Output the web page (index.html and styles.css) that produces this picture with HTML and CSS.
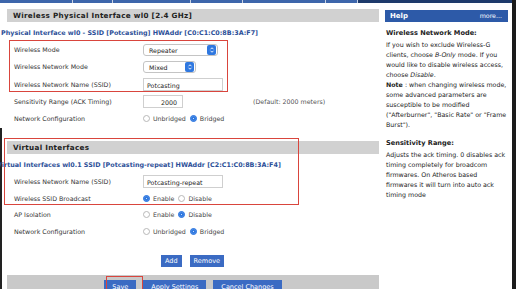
FILE: index.html
```html
<!DOCTYPE html>
<html lang="en">
<head>
  <meta charset="UTF-8">
  <title>Wireless Basic Settings</title>
  <link rel="stylesheet" href="styles.css">
</head>
<body>
  <div class="window">
    <div class="tabs">
      <span class="tab" style="width:72px"></span>
      <span class="tab" style="width:39px"></span>
      <span class="tab" style="width:77px"></span>
      <span class="tab" style="width:51px"></span>
      <span class="tab" style="width:82px"></span>
      <span class="tab" style="width:31px"></span>
    </div>

    <div class="page">
      <div class="main">
        <h2 class="section-title">Wireless Physical Interface wl0 [2.4 GHz]</h2>
        <div class="legend">Physical Interface wl0 - SSID [Potcasting] HWAddr [C0:C1:C0:8B:3A:F7]</div>

        <div class="rows">
          <div class="row">
            <span class="label">Wireless Mode</span>
            <span class="select select-wide">Repeater<span class="arrows"><svg viewBox="0 0 8 10" width="6" height="8"><path d="M2 4 L4 2 L6 4 M2 6 L4 8 L6 6" fill="none" stroke="#fff" stroke-width="1.2"/></svg></span></span>
          </div>
          <div class="row">
            <span class="label">Wireless Network Mode</span>
            <span class="select select-narrow">Mixed<span class="arrows"><svg viewBox="0 0 8 10" width="6" height="8"><path d="M2 4 L4 2 L6 4 M2 6 L4 8 L6 6" fill="none" stroke="#fff" stroke-width="1.2"/></svg></span></span>
          </div>
          <div class="row">
            <span class="label">Wireless Network Name (SSID)</span>
            <span class="input input-text">Potcasting</span>
          </div>
          <div class="row">
            <span class="label">Sensitivity Range (ACK Timing)</span>
            <span class="input input-num">2000</span>
            <span class="note">(Default: 2000 meters)</span>
          </div>
          <div class="row">
            <span class="label">Network Configuration</span>
            <span class="radio"></span><span class="opt">Unbridged</span>
            <span class="radio on"></span><span class="opt">Bridged</span>
          </div>
        </div>

        <h2 class="section-title second">Virtual Interfaces</h2>
        <div class="legend shifted">Virtual Interfaces wl0.1 SSID [Potcasting-repeat] HWAddr [C2:C1:C0:8B:3A:F4]</div>

        <div class="rows tight">
          <div class="row">
            <span class="label">Wireless Network Name (SSID)</span>
            <span class="input input-text">Potcasting-repeat</span>
          </div>
          <div class="row">
            <span class="label">Wireless SSID Broadcast</span>
            <span class="radio on"></span><span class="opt">Enable</span>
            <span class="radio"></span><span class="opt">Disable</span>
          </div>
          <div class="row">
            <span class="label">AP Isolation</span>
            <span class="radio"></span><span class="opt">Enable</span>
            <span class="radio on"></span><span class="opt">Disable</span>
          </div>
          <div class="row">
            <span class="label">Network Configuration</span>
            <span class="radio"></span><span class="opt">Unbridged</span>
            <span class="radio on"></span><span class="opt">Bridged</span>
          </div>
        </div>

        <div class="add-remove">
          <button class="btn">Add</button>
          <button class="btn">Remove</button>
        </div>

        <div class="submit-bar">
          <button class="btn">Save</button>
          <button class="btn">Apply Settings</button>
          <button class="btn">Cancel Changes</button>
        </div>
      </div>

      <div class="help">
        <div class="help-head"><span>Help</span><span class="more">more...</span></div>
        <h3>Wireless Network Mode:</h3>
        <p>If you wish to exclude Wireless-G clients, choose <i>B-Only</i> mode. If you would like to disable wireless access, choose <i>Disable</i>.</p>
        <p><b>Note</b> : when changing wireless mode, some advanced parameters are susceptible to be modified ("Afterburner", "Basic Rate" or "Frame Burst").</p>
        <h3 class="gap">Sensitivity Range:</h3>
        <p>Adjusts the ack timing. 0 disables ack timing completely for broadcom firmwares. On Atheros based firmwares it will turn into auto ack timing mode</p>
      </div>
    </div>

    <!-- annotation boxes drawn over the screenshot -->
    <div class="mark mark-1"></div>
    <div class="mark mark-2"></div>
    <div class="mark mark-3"></div>
  </div>
</body>
</html>
```

FILE: styles.css
```css
body {
  margin: 0;
  background: #fff;
  font-family: "DejaVu Sans", Verdana, sans-serif;
  font-size: 6.3px;
  color: #333;
}
.window {
  position: relative;
  width: 512px;
  height: 289px;
  overflow: hidden;
  border-right: 4px solid #1b1b1b;
  /* dark edge of the browser frame down the lower left side */
  background: linear-gradient(#222, #222) no-repeat 0 128px / 2px 161px;
}
.tabs {
  display: flex;
  height: 3px;
  background: #1e3a6b;
}
.tab {
  background: #3d66ab;
  border-right: 1px solid #c9d3e4;
}
.page {
  display: flex;
}
.main {
  width: 372px;
  margin-left: 7px;
}
.section-title {
  margin: 6px 0 0;
  height: 13px;
  line-height: 13px;
  padding-left: 6px;
  background: #d1d1d1;
  font-size: 7.2px;
  font-weight: bold;
  color: #222;
  letter-spacing: 0.3px;
}
.section-title.second {
  margin-top: 14px;
}
.legend {
  margin: 5px 0 0 -6px;
  height: 13px;
  line-height: 13px;
  font-size: 6.4px;
  font-weight: bold;
  color: #2c4f98;
  white-space: nowrap;
}
.legend.shifted {
  margin-left: -10px;
}
.rows {
  padding-top: 1px;
}
.rows.tight .row {
  height: 16.5px;
}
.row {
  display: flex;
  align-items: center;
  height: 17.3px;
  padding-left: 7px;
}
.label {
  width: 129px;
  flex-shrink: 0;
}
.select {
  position: relative;
  height: 12px;
  line-height: 12px;
  border: 1px solid #c4c4c4;
  border-radius: 3px;
  padding-left: 5px;
  box-sizing: border-box;
  background: #fff;
  color: #222;
}
.select-wide {
  width: 75px;
}
.select-narrow {
  width: 53px;
}
.arrows {
  position: absolute;
  right: 1px;
  top: 0;
  width: 9px;
  height: 10px;
  border-radius: 2px;
  background: #2f78e0;
  display: flex;
  align-items: center;
  justify-content: center;
}
.input {
  height: 13px;
  line-height: 13px;
  border: 1px solid #cfcfcf;
  box-sizing: border-box;
  padding: 0 3px;
  color: #222;
}
.input-text {
  width: 80px;
}
.input-num {
  width: 40px;
  text-align: right;
  padding-right: 5px;
}
.note {
  margin-left: 70px;
  color: #555;
}
.radio {
  width: 7px;
  height: 7px;
  border: 1px solid #b8b8b8;
  border-radius: 50%;
  box-sizing: border-box;
  margin-right: 3px;
}
.radio.on {
  border-color: #2f78e0;
  background: #2f78e0;
  box-shadow: inset 0 0 0 2px #2f78e0, inset 0 0 0 3.5px #fff;
}
.opt {
  margin-right: 4px;
  color: #444;
}
.btn {
  font-family: inherit;
  font-size: 6.5px;
  color: #fff;
  background: #3b6bc3;
  border: none;
  padding: 0 4px;
  height: 12px;
}
.add-remove {
  display: flex;
  justify-content: center;
  gap: 8px;
  margin-top: 15.5px;
  padding-right: 1px;
}
.submit-bar {
  display: flex;
  justify-content: center;
  gap: 7px;
  margin-top: 8px;
  height: 22px;
  padding-top: 5px;
  background: #c9c9c9;
  box-sizing: border-box;
}
.submit-bar .btn {
  height: 14px;
  padding: 0 8px;
}
.help {
  width: 123px;
  margin-left: 6px;
  color: #222;
}
.help-head {
  display: flex;
  justify-content: space-between;
  margin-top: 7px;
  height: 12px;
  line-height: 12px;
  padding: 0 6px 0 5px;
  background: #2d5aa8;
  color: #fff;
  font-weight: bold;
  font-size: 7px;
}
.help-head .more {
  font-weight: normal;
  font-size: 6.3px;
}
.help h3 {
  margin: 6px 0 2px 1px;
  font-size: 6.6px;
  line-height: 10px;
}
.help h3.gap {
  margin-top: 8px;
}
.help p {
  margin: 0 0 0 1px;
  line-height: 10px;
}
.mark {
  position: absolute;
  border: 1.5px solid #d9453d;
}
.mark-1 {
  left: 9px;
  top: 40px;
  width: 217px;
  height: 50px;
}
.mark-2 {
  left: 4px;
  top: 138px;
  width: 293px;
  height: 65px;
}
.mark-3 {
  left: 106px;
  top: 276px;
  width: 35px;
  height: 16px;
}
```
